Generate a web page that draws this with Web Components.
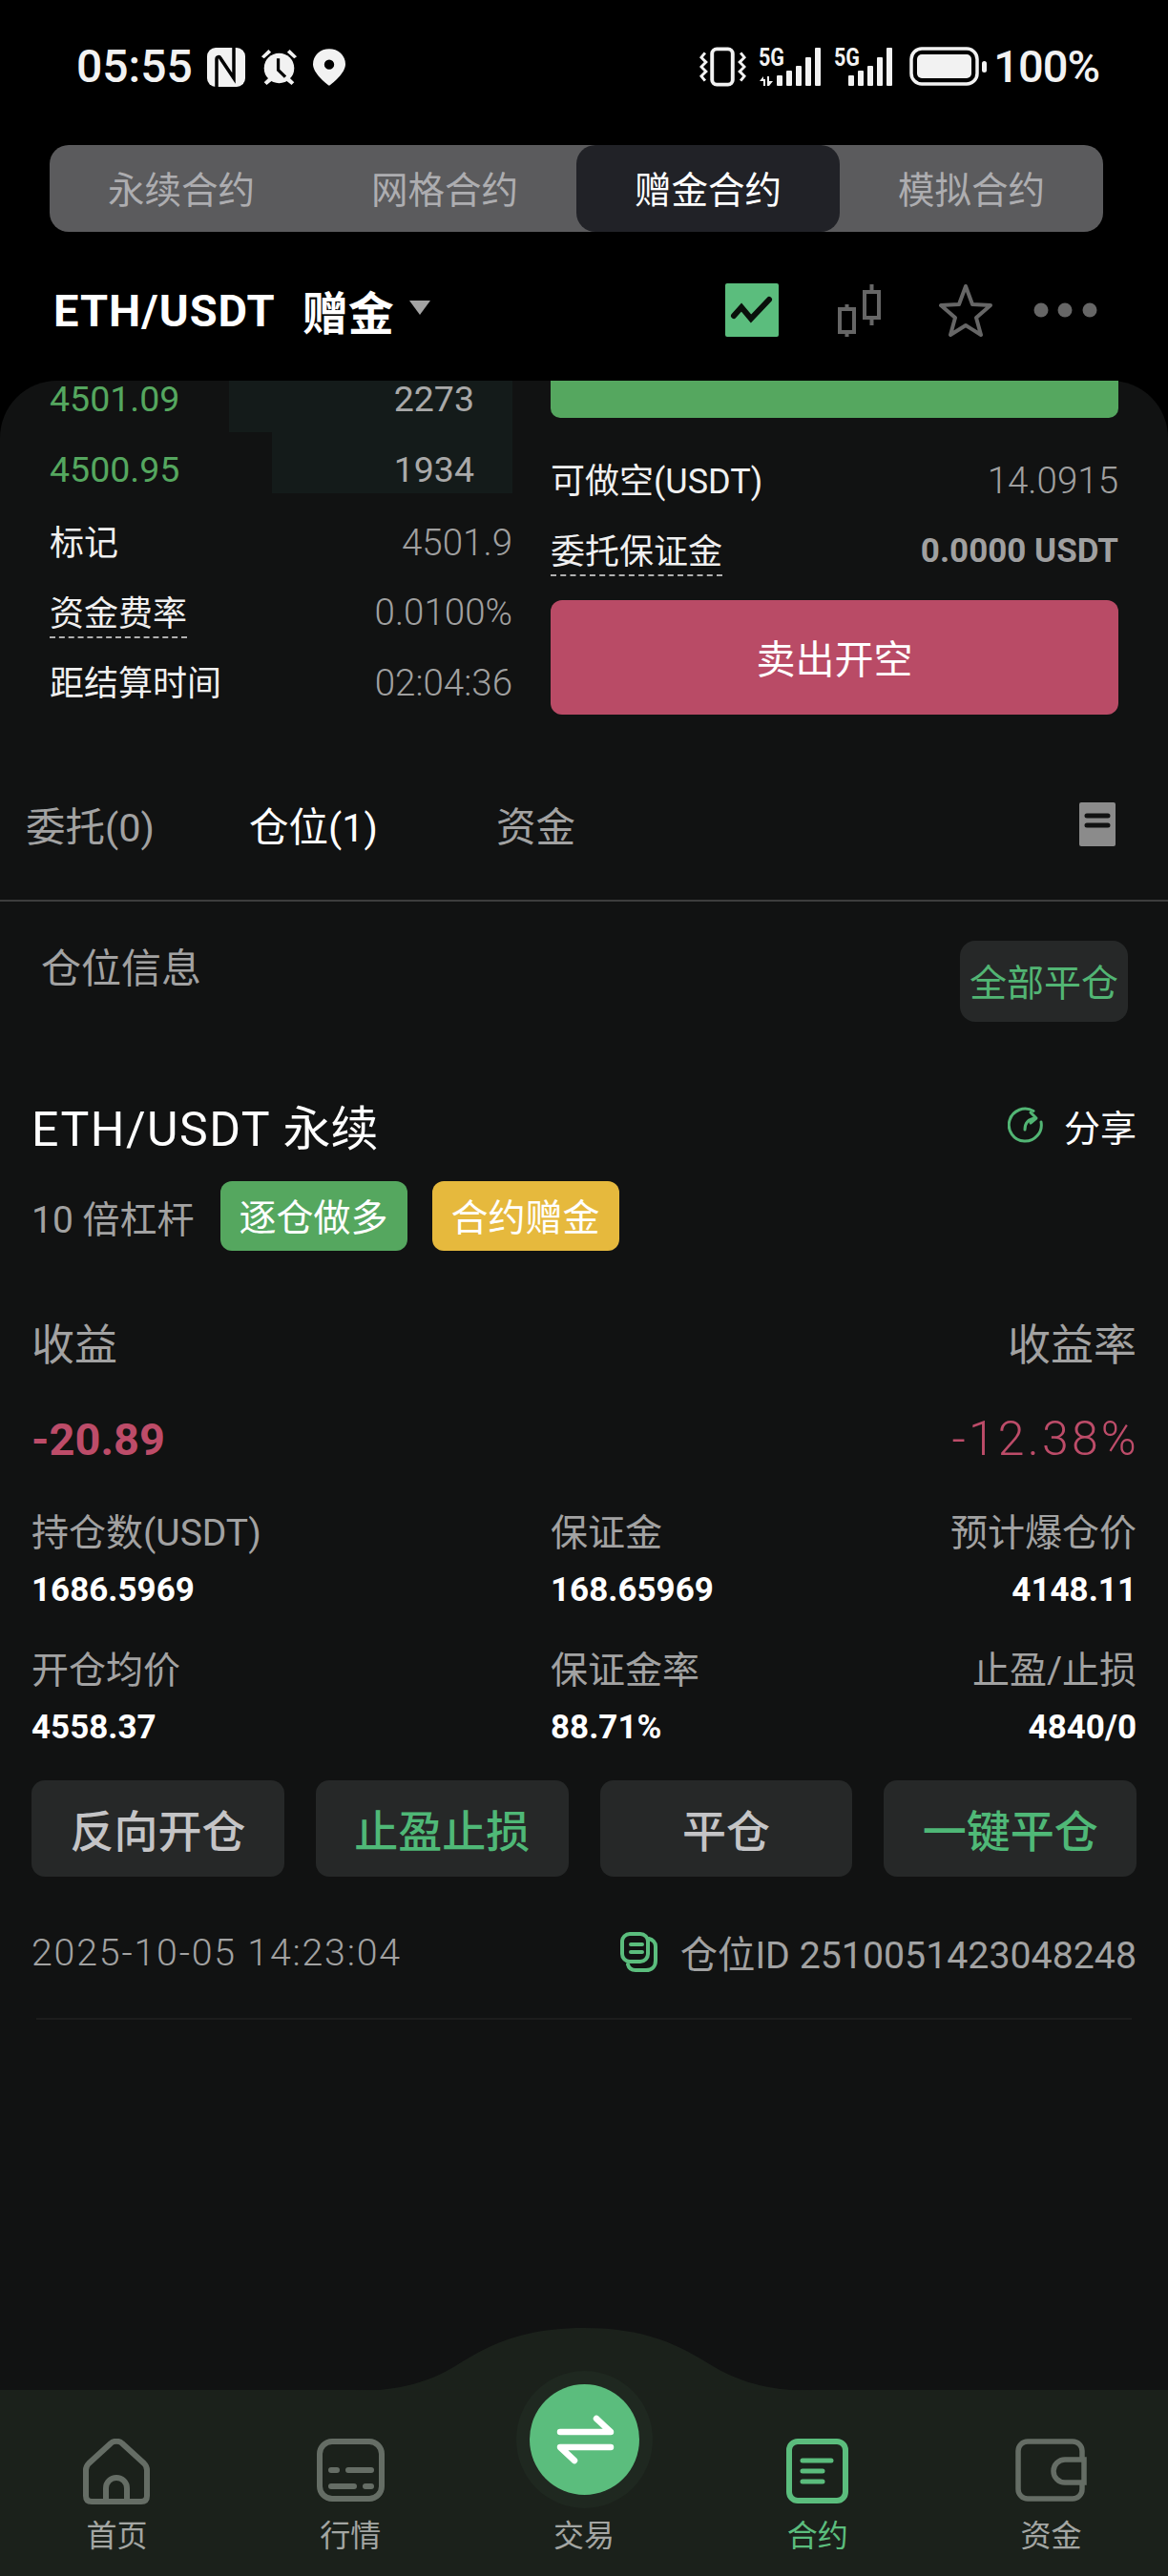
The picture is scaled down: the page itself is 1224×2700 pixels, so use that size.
<!DOCTYPE html>
<html lang="zh">
<head>
<meta charset="utf-8">
<title>合约</title>
<style>
  html, body { margin: 0; background: #000; }
  body {
    width: 1224px; height: 2700px; overflow: hidden;
    display: flex; flex-direction: column;
    font-family: Roboto, "Noto Sans CJK SC", sans-serif;
    color: #fff;
  }
</style>
</head>
<body>
  <status-bar></status-bar>
  <mode-tabs></mode-tabs>
  <pair-header></pair-header>
  <trade-panel></trade-panel>
  <order-tabs></order-tabs>
  <position-card></position-card>
  <bottom-nav></bottom-nav>

<script>
const CJK = 'Roboto, "Noto Sans CJK SC", sans-serif';

// the two signal meters only differ in where the bars start
const signalBars = x0 => [11, 16, 21, 30, 40].map((h, i) =>
  `<rect x="${x0 + i * 10}" y="${41 - h}" width="6" height="${h}" rx="1"/>`).join('');

class StatusBar extends HTMLElement {
  constructor() {
    super();
    const fiveG = '<text x="0" y="20" font-family="Roboto, sans-serif" font-weight="700" font-size="25" textLength="27" lengthAdjust="spacingAndGlyphs">5G</text>';
    this.attachShadow({mode: 'open'}).innerHTML = `
      <style>
        :host { display: flex; align-items: center; justify-content: space-between; height: 52px; margin-top: 44px; padding: 0 72px 0 80px; color: #f2f2f2; font-family: Roboto, sans-serif; font-weight: 500; font-size: 48px; }
        .side { display: flex; align-items: center; }
        svg { display: block; fill: #f2f2f2; }
        svg.net { margin-top: -8px; }
        .time { margin-right: 15px; line-height: 52px; }
        .pct { margin-left: 7px; line-height: 52px; font-size: 47px; letter-spacing: -1px; }
      </style>
      <div class="side">
        <span class="time">05:55</span>
        <svg width="40" height="41" viewBox="0 0 40 41">
          <rect width="40" height="41" rx="9"/>
          <path d="M10 41V12c0-3 3-3 4-1l14 21V0" fill="none" stroke="#000" stroke-width="3.500"/>
        </svg>
        <svg style="margin-left:16px" width="39" height="41" viewBox="0 0 42 42">
          <path d="M1 9 9 1l3 3-8 7zM41 9l-8-8-3 3 8 7zM9 33l-5 5 3 3 6-5zM33 33l5 5-3 3-6-5z"/>
          <circle cx="21" cy="22" r="17"/>
          <path d="M20 11v13l8 8" fill="none" stroke="#000" stroke-width="3.500"/>
        </svg>
        <svg style="margin-left:16px" width="34" height="41" viewBox="0 0 36 41"><path fill-rule="evenodd" d="M18 41C14 38 0 27 0 17a18 17 0 0 1 36 0c0 10-14 21-18 24zm0-18a5.500 5.500 0 1 0 0-11 5.500 5.500 0 0 0 0 11z"/></svg>
      </div>
      <div class="side">
        <svg width="49" height="42" viewBox="0 0 50 42">
          <rect x="13.500" y="2" width="22" height="38" rx="5" fill="none" stroke="#f2f2f2" stroke-width="4"/>
          <path d="M6 6 2 11l5 5-5 5 5 5-5 5 4 5M44 6l4 5-5 5 5 5-5 5 5 5-4 5" fill="none" stroke="#f2f2f2" stroke-width="3"/>
        </svg>
        <svg class="net" style="margin-left:13px" width="66" height="50" viewBox="0 -8 66 50">
          ${fiveG}
          <path d="M1 36l4-5v3h2v7H5v-5zM9 31h2v5h4l-4 5h-2z"/>
          ${signalBars(19)}
        </svg>
        <svg class="net" style="margin-left:13px" width="61" height="50" viewBox="0 -8 61 50">
          ${fiveG}
          ${signalBars(15)}
        </svg>
        <svg style="margin-left:18px" width="81" height="42" viewBox="0 0 81 42">
          <rect x="2" y="2" width="69" height="37" rx="11" fill="none" stroke="#f2f2f2" stroke-width="3.500"/>
          <rect x="8" y="8" width="57" height="25" rx="5"/>
          <rect x="76" y="15" width="5" height="12" rx="2.500"/>
        </svg>
        <span class="pct">100%</span>
      </div>`;
  }
}

class ModeTabs extends HTMLElement {
  constructor() {
    super();
    const labels = ['永续合约', '网格合约', '赠金合约', '模拟合约'];
    this.attachShadow({mode: 'open'}).innerHTML = `
      <style>
        :host { display: grid; grid-template-columns: repeat(4, 1fr); height: 91px; margin: 56px 68px 0 52px; border-radius: 20px; background: #5b5b5d; font-family: ${CJK}; font-size: 38.500px; color: #adadb0; }
        div { display: flex; align-items: center; justify-content: center; border-radius: 20px; box-sizing: border-box; padding-bottom: 4px; }
        .on { background: #212227; color: #fff; }
      </style>
      ${labels.map((t, i) => `<div class="${i === 2 ? 'on' : ''}">${t}</div>`).join('')}`;
  }
}

class PairHeader extends HTMLElement {
  constructor() {
    super();
    this.attachShadow({mode: 'open'}).innerHTML = `
      <style>
        :host { display: flex; align-items: center; height: 70px; margin: 47px 0 39px; padding: 0 74px 0 56px; font-family: ${CJK}; font-weight: 700; font-size: 47px; }
        .pair { letter-spacing: 1px; }
        .bonus { margin-left: 28px; font-size: 48px; }
        .caret { width: 0; height: 0; margin: 0 0 6px 16px; border: 11px solid transparent; border-top: 15px solid #a3a3a3; border-bottom: 0; }
        .tools { margin-left: auto; display: flex; align-items: center; }
        svg { display: block; }
      </style>
      <span class="pair">ETH/USDT</span><span class="bonus">赠金</span><i class="caret"></i>
      <div class="tools">
        <svg width="56" height="56" viewBox="0 0 56 56"><rect width="56" height="56" rx="2" fill="#5bbd7d"/><path d="M9 34l8-9 10 12 19-20" fill="none" stroke="#0a0f0b" stroke-width="6" stroke-linecap="round"/></svg>
        <svg style="margin-left:62px" width="46" height="56" viewBox="0 0 46 56" fill="none" stroke="#666" stroke-width="4">
          <rect x="2" y="27" width="15" height="24"/><path d="M9.500 22v5M9.500 51v5"/>
          <rect x="28" y="9" width="15" height="27"/><path d="M35.500 1v8M35.500 36v8"/>
        </svg>
        <svg style="margin-left:60px" width="56" height="56" viewBox="0 0 56 56"><path d="M28 3l7 19 19 1-15 13 5 18-16-10-16 10 5-18L2 23l19-1z" fill="none" stroke="#666" stroke-width="4" stroke-linejoin="round"/></svg>
        <svg style="margin-left:43px" width="67" height="16" viewBox="0 0 67 16" fill="#666"><circle cx="8" cy="8" r="7.500"/><circle cx="33" cy="8" r="7.500"/><circle cx="59" cy="8" r="7.500"/></svg>
      </div>`;
  }
}

// one label/value line of the book footer and of the order form
class InfoRow extends HTMLElement {
  constructor() {
    super();
    this.attachShadow({mode: 'open'}).innerHTML = `
      <style>
        :host { display: flex; justify-content: space-between; align-items: center; font-size: 36px; height: 50px; color: #a0a0a0; }
        .k { color: #f0f0f0; position: relative; margin-bottom: 4px; }
        .v { font-size: 38.500px; font-weight: 300; }
        :host([dashed]) .k::after { content: ''; position: absolute; left: 0; right: 0; bottom: -3px; border-bottom: 2px dashed #b0b0b0; }
        :host([strong]) .v { font-weight: 700; font-size: 35px; }
      </style>
      <span class="k"><slot name="k"></slot></span><span class="v"><slot></slot></span>`;
  }
}

class TradePanel extends HTMLElement {
  constructor() {
    super();
    this.attachShadow({mode: 'open'}).innerHTML = `
      <style>
        :host { display: grid; grid-template-columns: 485px 595px; column-gap: 40px; height: 418px; padding: 0 52px; border-radius: 60px 60px 0 0; background: #111212; font-family: ${CJK}; }
        .book, .form { display: flex; flex-direction: column; }
        .lvl { display: flex; justify-content: space-between; align-items: center; box-sizing: border-box; height: 54px; padding: 0 40px 16px 0; font-size: 37.500px; line-height: 38px; color: #a9a9a9; position: relative; }
        .lvl + .lvl { height: 64px; padding: 14px 40px 0 0; }
        .lvl b { font-weight: 400; color: #55a75f; position: relative; }
        .lvl span { position: relative; }
        .bar { position: absolute; top: 0; bottom: 0; right: 0; background: #141b1a; }
        .foot { display: flex; flex-direction: column; gap: 23.500px; margin-top: 26px; }
        .buy { height: 39px; border-radius: 0 0 10px 10px; background: #55a75f; flex: none; }
        .form info-row:first-of-type { margin-top: 40px; }
        .form info-row + info-row { margin-top: 24px; }
        .sell { display: flex; align-items: center; justify-content: center; box-sizing: border-box; height: 120px; margin-top: 27px; padding-bottom: 3px; border-radius: 12px; background: #b94b66; font-size: 41px; color: #fff; }
      </style>
      <div class="book">
        <div class="lvl"><i class="bar" style="left:188px"></i><b>4501.09</b><span>2273</span></div>
        <div class="lvl"><i class="bar" style="left:233px"></i><b>4500.95</b><span>1934</span></div>
        <div class="foot">
          <info-row><span slot="k">标记</span>4501.9</info-row>
          <info-row dashed><span slot="k">资金费率</span>0.0100%</info-row>
          <info-row><span slot="k">距结算时间</span>02:04:36</info-row>
        </div>
      </div>
      <div class="form">
        <div class="buy"></div>
        <info-row><span slot="k">可做空(USDT)</span>14.0915</info-row>
        <info-row dashed strong><span slot="k">委托保证金</span>0.0000 USDT</info-row>
        <div class="sell">卖出开空</div>
      </div>`;
  }
}

class OrderTabs extends HTMLElement {
  constructor() {
    super();
    this.attachShadow({mode: 'open'}).innerHTML = `
      <style>
        :host { display: flex; align-items: center; height: 128px; padding: 0 55px 0 27px; background: #111212; border-bottom: 2px solid #3d3d3d; font-family: ${CJK}; font-size: 41.500px; color: #a2a2a2; box-sizing: border-box; }
        span { padding-bottom: 32px; }
        span:nth-of-type(2) { margin-left: 99px; color: #fff; }
        span:nth-of-type(3) { margin-left: 124px; }
        svg { margin-left: auto; margin-bottom: 32px; display: block; }
      </style>
      <span>委托(0)</span><span>仓位(1)</span><span>资金</span>
      <svg width="38" height="46" viewBox="0 0 38 46"><rect width="38" height="46" rx="2" fill="#8b8b8b"/><path d="M8 14h22M8 24h22" stroke="#111212" stroke-width="5" stroke-linecap="round"/></svg>`;
  }
}

class StatCell extends HTMLElement {
  constructor() {
    super();
    this.attachShadow({mode: 'open'}).innerHTML = `
      <style>
        :host { display: flex; flex-direction: column; gap: 12px; font-size: 39px; color: #a2a2a2; }
        :host([end]) { text-align: right; }
        .v { font-weight: 700; font-size: 35px; line-height: 48px; color: #fff; }
        .k { line-height: 48px; }
      </style>
      <div class="k"><slot></slot></div><div class="v"><slot name="v"></slot></div>`;
  }
}

class PositionCard extends HTMLElement {
  constructor() {
    super();
    this.attachShadow({mode: 'open'}).innerHTML = `
      <style>
        :host { flex: 1; display: block; padding: 0 33px; background: #111212; font-family: ${CJK}; color: #a2a2a2; min-height: 0; }
        .info { display: flex; justify-content: space-between; align-items: flex-start; margin: 41px 9px 0 10px; font-size: 42px; }
        .info span { line-height: 60px; }
        .close-all { display: flex; align-items: center; justify-content: center; box-sizing: border-box; width: 176px; height: 85px; padding-bottom: 3px; border-radius: 16px; background: #262828; color: #52b574; font-size: 39px; }
        .title { display: flex; justify-content: space-between; align-items: center; box-sizing: border-box; height: 60px; margin-top: 80px; padding-bottom: 4px; color: #fff; font-size: 50px; }
        .title i { font-style: normal; letter-spacing: 1.500px; }
        .share { display: flex; align-items: center; font-size: 38px; }
        .share svg { margin-right: 21px; display: block; }
        .tags { display: flex; align-items: center; margin-top: 27px; font-size: 39px; }
        .tag { display: flex; align-items: center; justify-content: center; box-sizing: border-box; width: 196px; height: 73px; padding-bottom: 3px; border-radius: 12px; background: #55a75f; color: #fff; margin-left: 27px; }
        .tag.gold { background: #e6b93d; margin-left: 26px; }
        .pnl { display: flex; justify-content: space-between; margin-top: 70px; font-size: 45px; line-height: 60px; }
        .pnl-v { display: flex; justify-content: space-between; align-items: center; margin-top: 37px; height: 60px; color: #bd4c69; font-size: 50px; }
        .pnl-v b { font-size: 47px; }
        .pnl-v span { font-weight: 300; letter-spacing: 3.200px; margin-right: -3px; }
        .grid { display: grid; grid-template-columns: 544px 1fr auto; row-gap: 36px; margin-top: 45px; }
        .acts { display: grid; grid-template-columns: repeat(4, 1fr); column-gap: 33px; margin-top: 31px; }
        .acts div { display: flex; align-items: center; justify-content: center; box-sizing: border-box; height: 101px; padding-bottom: 2px; border-radius: 14px; background: #262828; font-size: 46px; font-weight: 500; color: #c4c4c6; }
        .acts .g { color: #4fb877; }
        .meta { display: flex; justify-content: space-between; align-items: center; margin-top: 50px; font-size: 39.300px; height: 60px; }
        .date { letter-spacing: 1.800px; font-weight: 300; }
        .id { display: flex; align-items: center; padding-bottom: 3px; }
        .id svg { margin-right: 23px; display: block; }
        .rule { height: 2px; margin: 38px 5px 0; background: #1c1c1c; }
      </style>
      <div class="info"><span>仓位信息</span><div class="close-all">全部平仓</div></div>
      <div class="title">
        <span><i>ETH/USDT</i> 永续</span>
        <div class="share">
          <svg width="38" height="38" viewBox="0 0 38 38" fill="none" stroke="#52b574" stroke-width="3" stroke-linecap="round" stroke-linejoin="round"><path d="M27 4.500A17 17 0 1 0 35 16"/><path d="M18 24c0-6 3-11 11-12M24 6l6 6-6 5"/></svg>
          分享
        </div>
      </div>
      <div class="tags">10 倍杠杆<div class="tag">逐仓做多</div><div class="tag gold">合约赠金</div></div>
      <div class="pnl"><span>收益</span><span>收益率</span></div>
      <div class="pnl-v"><b>-20.89</b><span>-12.38%</span></div>
      <div class="grid">
        <stat-cell>持仓数(USDT)<span slot="v">1686.5969</span></stat-cell>
        <stat-cell>保证金<span slot="v">168.65969</span></stat-cell>
        <stat-cell end>预计爆仓价<span slot="v">4148.11</span></stat-cell>
        <stat-cell>开仓均价<span slot="v">4558.37</span></stat-cell>
        <stat-cell>保证金率<span slot="v">88.71%</span></stat-cell>
        <stat-cell end>止盈/止损<span slot="v">4840/0</span></stat-cell>
      </div>
      <div class="acts"><div>反向开仓</div><div class="g">止盈止损</div><div>平仓</div><div class="g">一键平仓</div></div>
      <div class="meta">
        <span class="date">2025-10-05 14:23:04</span>
        <span class="id">
          <svg width="40" height="42" viewBox="0 0 40 42" fill="none" stroke="#5bbd7d" stroke-width="4" stroke-linecap="round"><rect x="2" y="2" width="27" height="29" rx="8"/><path d="M30 7c4 1 7 4 7 8v15c0 6-4 10-10 10H16c-4 0-7-2-8-6"/><path d="M11 13h12M11 21h12"/></svg>
          仓位ID 2510051423048248
        </span>
      </div>
      <div class="rule"></div>`;
  }
}

class BottomNav extends HTMLElement {
  constructor() {
    super();
    const ic = '#656d65';
    this.attachShadow({mode: 'open'}).innerHTML = `
      <style>
        :host { display: block; position: relative; height: 195px; background: #1b211b; font-family: ${CJK}; font-size: 32px; color: #a3a6a3; }
        .hump { position: absolute; left: 372px; top: -65px; display: block; }
        .ring { position: absolute; left: 541px; top: -20px; width: 143px; height: 144px; border-radius: 50%; background: #1f2820; display: flex; align-items: center; justify-content: center; }
        .disc { width: 115px; height: 116px; border-radius: 50%; background: #5bbd7d; display: flex; align-items: center; justify-content: center; }
        .disc svg { display: block; }
        nav { position: relative; display: grid; grid-template-columns: repeat(5, 1fr); height: 100%; }
        .item { display: flex; flex-direction: column; align-items: center; justify-content: flex-end; padding-bottom: 22px; line-height: 40px; }
        .slot { display: flex; align-items: flex-start; justify-content: center; height: 72px; margin-bottom: 10px; }
        .slot svg { display: block; }
        .on { color: #5bbd7d; }
      </style>
      <svg class="hump" width="480" height="66" viewBox="0 0 480 66"><path d="M0 66C50 66 80 55 105 40 140 18 175 0 240 0s100 18 135 40c25 15 55 26 105 26z" fill="#1b211b"/></svg>
      <div class="ring"><div class="disc">
        <svg width="66" height="66" viewBox="0 0 66 66" fill="none" stroke="#fff" stroke-width="6.500" stroke-linecap="round" stroke-linejoin="round"><path d="M7 25h53L45 11M60 41H7l15 14"/></svg>
      </div></div>
      <nav>
        <div class="item">
          <div class="slot"><svg width="70" height="70" viewBox="0 0 70 70" fill="none" stroke="${ic}" stroke-width="6" stroke-linejoin="round"><path d="M29 5 6 26c-2 2-3 4-3 7v27c0 4 2 6 6 6h52c4 0 6-2 6-6V33c0-3-1-5-3-7L41 5c-3-3-9-3-12 0z"/><path d="M24 66V52a11 11 0 0 1 22 0v14"/></svg></div>
          首页
        </div>
        <div class="item">
          <div class="slot"><svg width="71" height="66" viewBox="0 0 71 66" fill="none" stroke="${ic}" stroke-width="6" stroke-linecap="round"><rect x="3" y="3" width="65" height="60" rx="13"/><path d="M15 33h6M33 33h24M15 50h24M51 50h6"/></svg></div>
          行情
        </div>
        <div class="item">
          <div class="slot"></div>
          交易
        </div>
        <div class="item on">
          <div class="slot"><svg width="65" height="68" viewBox="0 0 65 68" fill="none" stroke="#5bbd7d" stroke-linecap="round"><rect x="3" y="3" width="59" height="62" rx="9" stroke-width="6"/><path d="M17 23h30M17 34h21M17 45h21" stroke-width="5"/></svg></div>
          合约
        </div>
        <div class="item">
          <div class="slot"><svg width="75" height="66" viewBox="0 0 75 66" fill="none" stroke="${ic}" stroke-width="5.500"><path d="M70 22V13A10 10 0 0 0 60 3H13A10 10 0 0 0 3 13v40a10 10 0 0 0 10 10h47a10 10 0 0 0 10-10v-7"/><path d="M72 22H52a12 12 0 0 0 0 24h20z"/></svg></div>
          资金
        </div>
      </nav>`;
  }
}

customElements.define('status-bar', StatusBar);
customElements.define('mode-tabs', ModeTabs);
customElements.define('pair-header', PairHeader);
customElements.define('info-row', InfoRow);
customElements.define('trade-panel', TradePanel);
customElements.define('order-tabs', OrderTabs);
customElements.define('stat-cell', StatCell);
customElements.define('position-card', PositionCard);
customElements.define('bottom-nav', BottomNav);
</script>
</body>
</html>
